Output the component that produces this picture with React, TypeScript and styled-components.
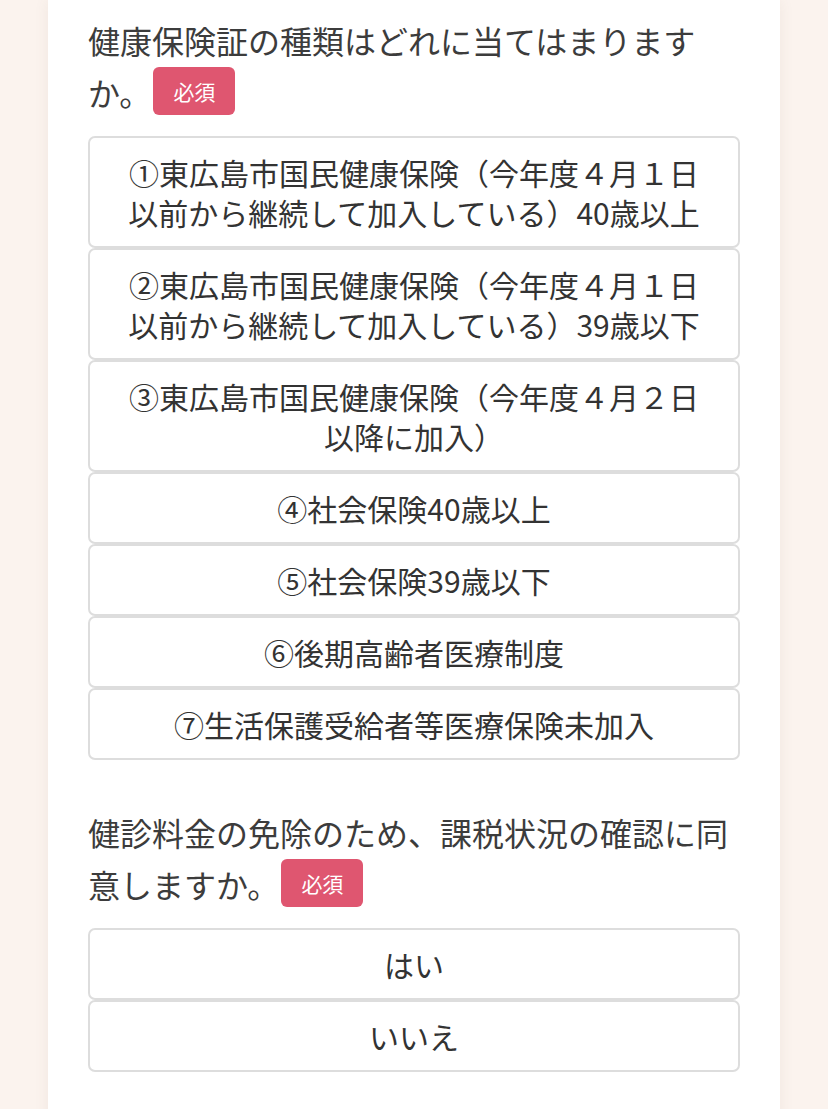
import styled, { createGlobalStyle } from "styled-components";

const GlobalStyle = createGlobalStyle`
  body {
    margin: 0;
    background: #fbf3ee;
    font-family: "Noto Sans CJK JP", "Noto Sans", sans-serif;
  }
`;

const Page = styled.div`
  display: flex;
  justify-content: center;
  min-height: 100vh;
`;

const Card = styled.div`
  width: 732px;
  box-sizing: border-box;
  background: #ffffff;
  padding: 14px 40px 40px;
  box-shadow: 0 0 14px rgba(120, 90, 70, 0.08);
`;

const QuestionGroup = styled.section`
  margin-bottom: 46px;
`;

const Question = styled.div`
  font-size: 32px;
  line-height: 52px;
  color: #3c3c3c;
  margin-bottom: 18px;
`;

const Required = styled.span`
  display: inline-block;
  vertical-align: top;
  height: 48px;
  line-height: 48px;
  padding: 0 20px;
  margin: 1px 0 0 2px;
  border-radius: 6px;
  background: #df5670;
  color: #ffffff;
  font-size: 21px;
`;

const Options = styled.div`
  display: flex;
  flex-direction: column;
`;

const Option = styled.button`
  display: block;
  width: 100%;
  box-sizing: border-box;
  background: #ffffff;
  border: 2px solid #dddddd;
  border-radius: 7px;
  padding: 14px 28px;
  font-family: inherit;
  font-size: 30px;
  line-height: 40px;
  color: #333333;
  text-align: center;
  cursor: pointer;
`;

const insuranceOptions = [
  "①東広島市国民健康保険（今年度４月１日以前から継続して加入している）40歳以上",
  "②東広島市国民健康保険（今年度４月１日以前から継続して加入している）39歳以下",
  "③東広島市国民健康保険（今年度４月２日以降に加入）",
  "④社会保険40歳以上",
  "⑤社会保険39歳以下",
  "⑥後期高齢者医療制度",
  "⑦生活保護受給者等医療保険未加入",
];

const consentOptions = ["はい", "いいえ"];

const App = () => {
  return (
    <Page>
      <GlobalStyle />
      <Card>
        <QuestionGroup>
          <Question>
            健康保険証の種類はどれに当てはまりますか。
            <Required>必須</Required>
          </Question>
          <Options>
            {insuranceOptions.map((label) => (
              <Option key={label}>{label}</Option>
            ))}
          </Options>
        </QuestionGroup>
        <QuestionGroup>
          <Question>
            健診料金の免除のため、課税状況の確認に同意しますか。
            <Required>必須</Required>
          </Question>
          <Options>
            {consentOptions.map((label) => (
              <Option key={label}>{label}</Option>
            ))}
          </Options>
        </QuestionGroup>
      </Card>
    </Page>
  );
};

export default App;
